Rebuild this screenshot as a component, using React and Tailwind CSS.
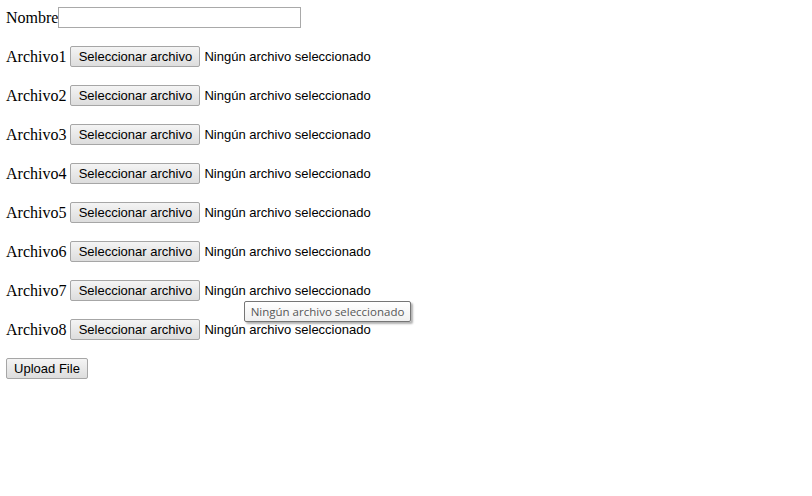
import React from "react";

const serif = { fontFamily: '"Liberation Serif", "Times New Roman", serif' };

function FileRow({ n }) {
  return (
    <div className="flex items-center h-[22px] text-[16px] text-black" style={serif}>
      <span className="pt-[2px]">Archivo{n}</span>
      <button className="ml-[4px] w-[130px] h-[21px] border border-[#a6a6a6] rounded-[2px] bg-gradient-to-b from-[#f4f4f4] to-[#dddddd] text-[13px] text-black font-['Liberation_Sans',Arial,sans-serif] leading-none flex items-center justify-center">
        Seleccionar archivo
      </button>
      <span className="ml-[4px] pt-[2px] text-[13px] font-['Liberation_Sans',Arial,sans-serif]">
        Ningún archivo seleccionado
      </span>
    </div>
  );
}

export default function App() {
  return (
    <div className="relative w-[812px] h-[496px] bg-white pl-[6px] pt-[7px] flex flex-col gap-[17px]">
      <div className="flex items-center h-[21px] text-[16px] text-black" style={serif}>
        <span>Nombre</span>
        <input type="text" className="w-[243px] h-[21px] border border-[#a9a9a9] bg-white outline-none" />
      </div>
      {[1, 2, 3, 4, 5, 6, 7, 8].map((n) => (
        <FileRow key={n} n={n} />
      ))}
      <div className="flex items-center h-[22px]">
        <button className="w-[82px] h-[21px] border border-[#a6a6a6] rounded-[2px] bg-gradient-to-b from-[#f4f4f4] to-[#dddddd] text-[13px] text-black font-['Liberation_Sans',Arial,sans-serif] leading-none flex items-center justify-center">
          Upload File
        </button>
      </div>
      <div className="absolute left-[244px] top-[301px] w-[167px] h-[21px] border border-[#767676] rounded-[2px] bg-gradient-to-b from-white to-[#f0f0f0] shadow-[2px_2px_2px_rgba(0,0,0,0.3)] text-[11.5px] text-[#575757] font-['Open_Sans',sans-serif] flex items-center justify-center leading-none">
        Ningún archivo seleccionado
      </div>
    </div>
  );
}
